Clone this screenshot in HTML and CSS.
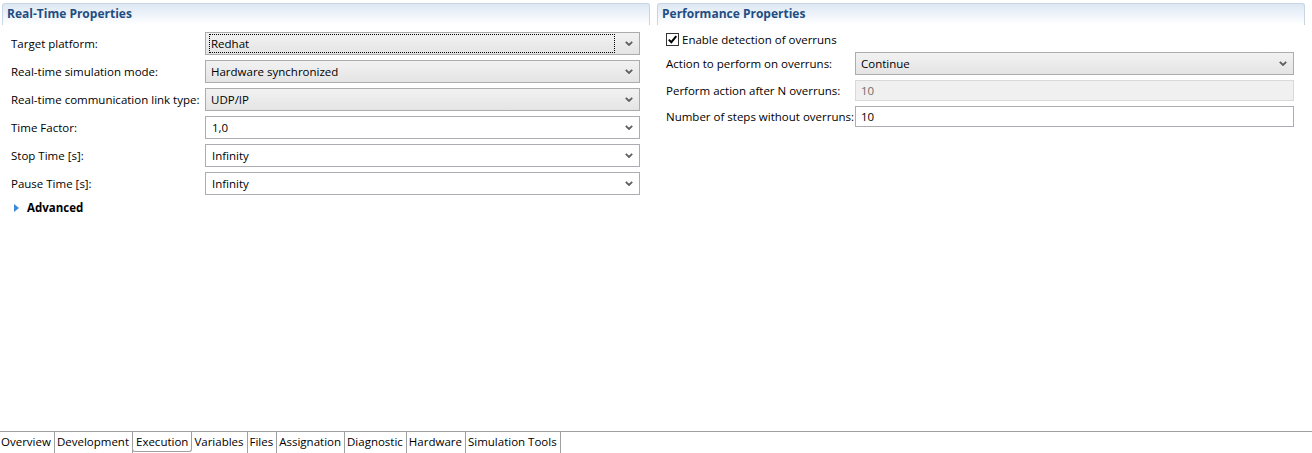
FILE: index.html
```html
<!DOCTYPE html>
<html>
<head>
<meta charset="utf-8">
<link rel="stylesheet" href="styles.css">
</head>
<body>
<div class="page">
  <div class="main">
    <section class="panel left">
      <div class="head">Real-Time Properties</div>
      <div class="form form-left">
        <label>Target platform:</label>
        <div class="combo ro focus"><span class="val dotted">Redhat</span><svg class="chev" width="8" height="5" viewBox="0 0 8 5"><polyline points="0.8,0.8 4,4 7.2,0.8" fill="none" stroke="#5f5f5f" stroke-width="1.8"/></svg></div>
        <label>Real-time simulation mode:</label>
        <div class="combo ro"><span class="val">Hardware synchronized</span><svg class="chev" width="8" height="5" viewBox="0 0 8 5"><polyline points="0.8,0.8 4,4 7.2,0.8" fill="none" stroke="#5f5f5f" stroke-width="1.8"/></svg></div>
        <label>Real-time communication link type:</label>
        <div class="combo ro"><span class="val">UDP/IP</span><svg class="chev" width="8" height="5" viewBox="0 0 8 5"><polyline points="0.8,0.8 4,4 7.2,0.8" fill="none" stroke="#5f5f5f" stroke-width="1.8"/></svg></div>
        <label>Time Factor:</label>
        <div class="combo ed"><span class="val">1,0</span><svg class="chev" width="8" height="5" viewBox="0 0 8 5"><polyline points="0.8,0.8 4,4 7.2,0.8" fill="none" stroke="#5f5f5f" stroke-width="1.8"/></svg></div>
        <label>Stop Time [s]:</label>
        <div class="combo ed"><span class="val">Infinity</span><svg class="chev" width="8" height="5" viewBox="0 0 8 5"><polyline points="0.8,0.8 4,4 7.2,0.8" fill="none" stroke="#5f5f5f" stroke-width="1.8"/></svg></div>
        <label>Pause Time [s]:</label>
        <div class="combo ed"><span class="val">Infinity</span><svg class="chev" width="8" height="5" viewBox="0 0 8 5"><polyline points="0.8,0.8 4,4 7.2,0.8" fill="none" stroke="#5f5f5f" stroke-width="1.8"/></svg></div>
      </div>
      <div class="advanced">
        <svg class="tri" width="5" height="8" viewBox="0 0 5 8"><polygon points="0,0 5,4 0,8" fill="#3a8ad4"/></svg>
        <span>Advanced</span>
      </div>
    </section>
    <section class="panel right">
      <div class="head">Performance Properties</div>
      <div class="check-row">
        <span class="checkbox"><svg width="11" height="11" viewBox="0 0 11 11"><polyline points="1.8,5.6 4.3,8.2 9.3,2.2" fill="none" stroke="#000" stroke-width="2"/></svg></span>
        <span>Enable detection of overruns</span>
      </div>
      <div class="form form-right">
        <label>Action to perform on overruns:</label>
        <div class="combo ro"><span class="val">Continue</span><svg class="chev" width="8" height="5" viewBox="0 0 8 5"><polyline points="0.8,0.8 4,4 7.2,0.8" fill="none" stroke="#5f5f5f" stroke-width="1.8"/></svg></div>
        <label>Perform action after N overruns:</label>
        <div class="text disabled">10</div>
        <label>Number of steps without overruns:</label>
        <div class="text">10</div>
      </div>
    </section>
  </div>
  <div class="tabs">
    <div class="tab">Overview</div>
    <div class="tab">Development</div>
    <div class="tab active">Execution</div>
    <div class="tab">Variables</div>
    <div class="tab">Files</div>
    <div class="tab">Assignation</div>
    <div class="tab">Diagnostic</div>
    <div class="tab">Hardware</div>
    <div class="tab">Simulation Tools</div>
  </div>
</div>
</body>
</html>
```

FILE: styles.css
```css
html, body {
  margin: 0;
  padding: 0;
  background: #fff;
}
body {
  font-family: "Open Sans", "Noto Sans", sans-serif;
  font-size: 11.5px;
  color: #000;
  width: 1312px;
  height: 453px;
  overflow: hidden;
}
.page {
  display: flex;
  flex-direction: column;
  height: 453px;
}
.main {
  flex: 1;
  display: flex;
  gap: 7px;
  padding: 3px 0 0 2px;
}
.panel {
  display: flex;
  flex-direction: column;
}
.panel.left { width: 648px; }
.panel.right { width: 648px; }
.head {
  height: 22px;
  box-sizing: border-box;
  border: 1px solid #c8d5e3;
  border-bottom: none;
  border-radius: 3px 3px 0 0;
  background: linear-gradient(#dde7f3, #ffffff);
  font-weight: bold;
  color: #1e4e82;
  padding: 2px 0 0 4px;
  line-height: 16px;
  font-size: 12px;
}
.form {
  display: grid;
  align-items: center;
}
.form-left {
  grid-template-columns: 194px 435px;
  row-gap: 5px;
  margin: 7px 0 0 9px;
}
.form-left .combo { height: 23px; }
.form-right {
  grid-template-columns: 189px 439px;
  row-gap: 5px;
  margin: 5px 0 0 9px;
}
.form-right .combo { height: 23px; }
.form-right .text { height: 21px; }
label {
  white-space: nowrap;
}
.combo {
  box-sizing: border-box;
  border: 1px solid #acacac;
  display: flex;
  align-items: center;
  justify-content: space-between;
  padding: 0 6px 0 4px;
}
.combo.ro {
  background: linear-gradient(#f2f2f2, #e4e4e4);
}
.combo.ed {
  background: #fff;
  border-color: #abadb3;
  padding-left: 5px;
}
.val {
  line-height: 15px;
  padding: 0 1px;
}
.dotted {
  flex: 1;
  margin-right: 10px;
  border: 1px dotted #000;
  padding: 1px 0 1px 1px;
  margin-left: -1px;
}
.chev { flex: none; }
.text {
  box-sizing: border-box;
  border: 1px solid #abadb3;
  background: #fff;
  padding: 0 5px;
  line-height: 19px;
}
.text.disabled {
  background: #f0f0f0;
  border-color: #d9d9d9;
  color: #6d6d6d;
}
.advanced {
  display: flex;
  align-items: center;
  gap: 8px;
  margin: 5px 0 0 12px;
  font-weight: bold;
}
.check-row {
  display: flex;
  align-items: center;
  gap: 3px;
  margin: 7px 0 0 9px;
}
.checkbox {
  width: 13px;
  height: 13px;
  box-sizing: border-box;
  border: 1px solid #333;
  background: #fff;
  display: flex;
  align-items: center;
  justify-content: center;
}
.tabs {
  height: 22px;
  box-sizing: border-box;
  border-top: 1px solid #a0a0a0;
  display: flex;
  align-items: stretch;
}
.tab {
  padding: 0 3px 0 2px;
  border-right: 1px solid #a0a0a0;
  line-height: 20px;
  background: #fff;
}
.tab:first-child {
  padding-left: 1px;
}
.tab.active {
  border: 1px solid #a0a0a0;
  border-top: none;
  border-radius: 0 0 3px 3px;
  margin-left: -1px;
  margin-bottom: 1px;
  padding: 0 3px 0 3px;
}
```
